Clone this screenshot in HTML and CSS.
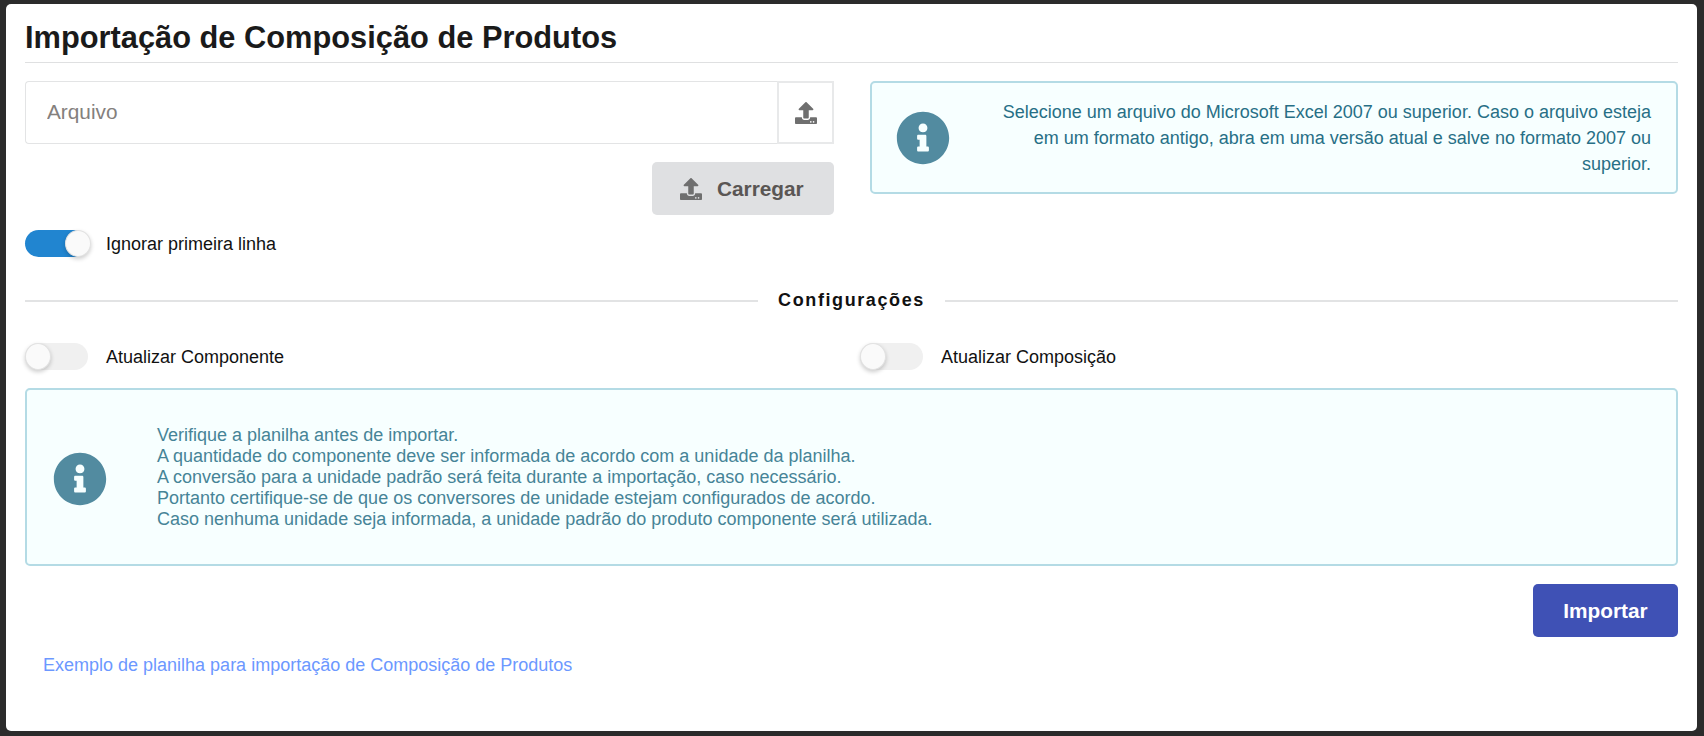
FILE: index.html
```html
<!DOCTYPE html>
<html lang="pt-BR">
    <head>
        <meta charset="utf-8">
        <meta name="viewport" content="width=device-width, initial-scale=1">
        <title>Importação de Composição de Produtos</title>
        <link rel="stylesheet" href="styles.css">
    </head>

    <body>
        <svg class="icon-defs" width="0" height="0" aria-hidden="true">
            <symbol id="icon-upload" viewBox="0 0 512 512">
                <path d="M296 384h-80c-13.3 0-24-10.7-24-24V192h-87.7c-17.8 0-26.7-21.5-14.1-34.1L242.3 5.7c7.5-7.5 19.8-7.5 27.3 0l152.2 152.2c12.6 12.6 3.7 34.1-14.1 34.1H320v168c0 13.3-10.7 24-24 24zm216-8v112c0 13.3-10.7 24-24 24H24c-13.3 0-24-10.7-24-24V376c0-13.3 10.7-24 24-24h136v8c0 30.9 25.1 56 56 56h80c30.9 0 56-25.1 56-56v-8h136c13.3 0 24 10.7 24 24zm-124 88c0-11-9-20-20-20s-20 9-20 20 9 20 20 20 20-9 20-20zm64 0c0-11-9-20-20-20s-20 9-20 20 9 20 20 20 20-9 20-20z"/>
            </symbol>
            <symbol id="icon-info" viewBox="0 0 512 512">
                <path d="M256 8C119.043 8 8 119.083 8 256c0 136.997 111.043 248 248 248s248-111.003 248-248C504 119.083 392.957 8 256 8zm0 110c23.196 0 42 18.804 42 42s-18.804 42-42 42-42-18.804-42-42 18.804-42 42-42zm56 254c0 6.627-5.373 12-12 12h-88c-6.627 0-12-5.373-12-12v-24c0-6.627 5.373-12 12-12h12v-64h-12c-6.627 0-12-5.373-12-12v-24c0-6.627 5.373-12 12-12h64c6.627 0 12 5.373 12 12v100h12c6.627 0 12 5.373 12 12v24z"/>
            </symbol>
        </svg>

        <main class="modal">
            <h1 class="modal-title">Importação de Composição de Produtos</h1>

            <section class="upload-row">
                <div class="upload-col">
                    <div class="file-field">
                        <input class="file-input" type="text" placeholder="Arquivo">
                        <button class="file-addon" type="button">
                            <svg class="icon-upload"><use href="#icon-upload"/></svg>
                        </button>
                    </div>
                    <div class="load-row">
                        <button class="btn-load" type="button">
                            <svg class="icon-upload"><use href="#icon-upload"/></svg>
                            Carregar
                        </button>
                    </div>
                    <label class="switch-row">
                        <span class="switch switch-on"><span class="switch-knob"></span></span>
                        <span class="switch-label">Ignorar primeira linha</span>
                    </label>
                </div>

                <div class="alert alert-side">
                    <svg class="icon-info"><use href="#icon-info"/></svg>
                    <p class="alert-text-right">Selecione um arquivo do Microsoft Excel 2007 ou superior. Caso o arquivo esteja em um formato antigo, abra em uma versão atual e salve no formato 2007 ou superior.</p>
                </div>
            </section>

            <div class="divider"><span>Configurações</span></div>

            <section class="config-row">
                <label class="switch-row">
                    <span class="switch"><span class="switch-knob"></span></span>
                    <span class="switch-label">Atualizar Componente</span>
                </label>
                <label class="switch-row">
                    <span class="switch"><span class="switch-knob"></span></span>
                    <span class="switch-label">Atualizar Composição</span>
                </label>
            </section>

            <div class="alert alert-wide">
                <svg class="icon-info"><use href="#icon-info"/></svg>
                <p class="alert-text">
                    Verifique a planilha antes de importar.<br>
                    A quantidade do componente deve ser informada de acordo com a unidade da planilha.<br>
                    A conversão para a unidade padrão será feita durante a importação, caso necessário.<br>
                    Portanto certifique-se de que os conversores de unidade estejam configurados de acordo.<br>
                    Caso nenhuma unidade seja informada, a unidade padrão do produto componente será utilizada.
                </p>
            </div>

            <div class="actions">
                <button class="btn-import" type="button">Importar</button>
            </div>

            <a class="sample-link" href="#">Exemplo de planilha para importação de Composição de Produtos</a>
        </main>
    </body>
</html>
```

FILE: styles.css
```css
/* page */
html, body {
    height: 100%;
}

body {
    margin: 0;
    padding: 4px 7px 5px 6px;
    box-sizing: border-box;
    background-color: #2b2b2b;
    font-family: "Liberation Sans", Arial, sans-serif;
    color: #111;
    overflow: hidden;
}

.icon-defs {
    position: absolute;
}

.modal {
    height: 100%;
    box-sizing: border-box;
    padding: 16px 19px 0;
    background: #fff;
    border-radius: 5px;
}

.modal-title {
    margin: 0;
    height: 39px;
    padding-top: 3px;
    line-height: 29px;
    font-size: 30.8px;
    font-weight: bold;
    color: #1a1a1a;
    border-bottom: 1px solid #dfe0e1;
}

/* top row */
.upload-row {
    display: grid;
    grid-template-columns: 809px 808px;
    column-gap: 36px;
    margin-top: 18px;
}

.file-field {
    display: flex;
    height: 63px;
}

.file-input {
    flex: 1;
    min-width: 0;
    padding: 0 20px 2px 21px;
    border: 1px solid #e3e4e5;
    border-right: none;
    border-radius: 4px 0 0 4px;
    outline: none;
    background: transparent;
    font-family: inherit;
    font-size: 20.8px;
}

.file-input::placeholder {
    color: #84807d;
    opacity: 1;
}

.file-addon {
    width: 57px;
    padding: 0;
    border: 2px solid #e8e9ea;
    background: #fff;
}

.icon-upload {
    width: 22px;
    height: 22px;
    fill: #6f6f6f;
    vertical-align: middle;
}

.load-row {
    display: flex;
    justify-content: flex-end;
    margin-top: 18px;
}

.btn-load {
    display: flex;
    align-items: center;
    gap: 15px;
    width: 182px;
    height: 53px;
    padding: 0 0 0 28px;
    border: none;
    border-radius: 5px;
    background: #dfe0e2;
    color: #5a5654;
    font-family: inherit;
    font-size: 20.8px;
    font-weight: bold;
}

/* switches */
.switch-row {
    display: flex;
    align-items: center;
    gap: 18px;
    font-size: 18px;
    color: #111;
}

.switch-label {
    padding-top: 2px;
}

.upload-col .switch-row {
    margin-top: 15px;
}

.switch {
    display: flex;
    width: 63px;
    height: 27px;
    border-radius: 14px;
    background: #f0f0f0;
}

.switch-on {
    justify-content: flex-end;
    background: #2185d0;
}

.switch-on .switch-knob {
    margin-right: -3px;
}

.switch-knob {
    width: 26px;
    height: 27px;
    box-sizing: border-box;
    border: 1px solid #e2e2e2;
    border-radius: 50%;
    background: #fafafa;
    box-shadow: 0 2px 4px rgba(0, 0, 0, 0.2);
}

/* info boxes */
.alert {
    display: flex;
    align-items: center;
    box-sizing: border-box;
    border: 2px solid #b4dbe5;
    border-radius: 5px;
    background: #f7ffff;
    color: #468497;
    font-size: 18px;
}

.alert p {
    margin: 0;
}

.icon-info {
    flex: none;
    width: 54px;
    height: 54px;
    fill: #528ba0;
}

.alert-side {
    height: 113px;
    padding: 0 25px 0 24px;
    color: #276f86;
}

.alert-text-right {
    flex: 1;
    padding-left: 46px;
    text-align: right;
    line-height: 26px;
}

.alert-wide {
    height: 178px;
    margin-top: 18px;
    padding: 0 0 0 26px;
}

.alert-wide .icon-info {
    margin-top: 4px;
}

.alert-text {
    padding-left: 50px;
    line-height: 21px;
}

/* divider */
.divider {
    display: flex;
    align-items: center;
    gap: 20px;
    margin-top: 33px;
    font-size: 18px;
    font-weight: bold;
    letter-spacing: 1.6px;
}

.divider::before,
.divider::after {
    content: "";
    flex: 1;
    height: 2px;
    background: #e2e3e4;
}

.config-row {
    display: grid;
    grid-template-columns: 835px 1fr;
    margin-top: 32px;
}

/* bottom */
.actions {
    display: flex;
    justify-content: flex-end;
    margin-top: 18px;
}

.btn-import {
    width: 145px;
    height: 53px;
    border: none;
    border-radius: 5px;
    background: #3f51b5;
    color: #fff;
    font-family: inherit;
    font-size: 20.8px;
    font-weight: bold;
}

.sample-link {
    display: inline-block;
    margin: 18px 0 0 18px;
    font-size: 18px;
    color: #6c98ff;
    text-decoration: none;
}
```
